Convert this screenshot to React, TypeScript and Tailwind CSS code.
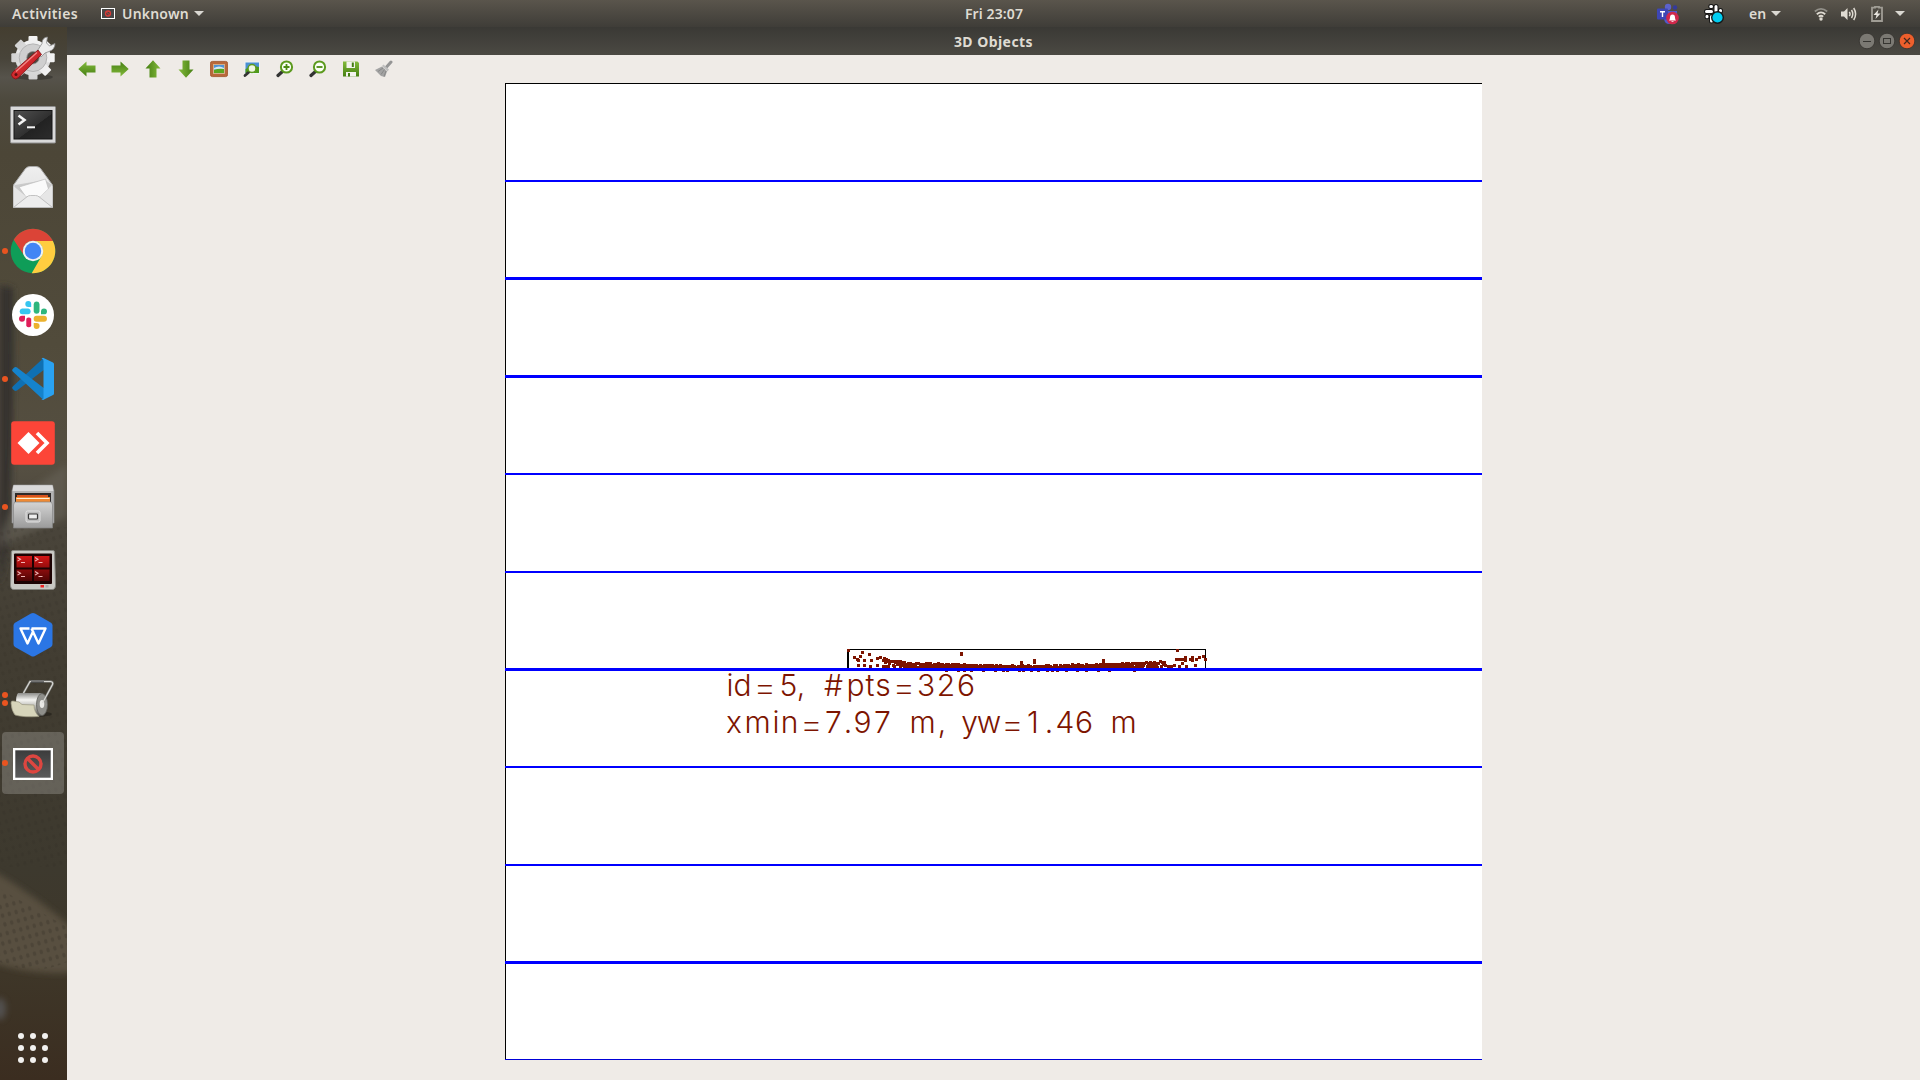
import type { ReactNode } from 'react';

const UI_FONT = "font-['Noto_Sans','Open_Sans',sans-serif]";

/* ---------- Dock icons (48 x 48) ---------- */

function Icon({ children }: { children: ReactNode }) {
  return (
    <svg viewBox="0 0 48 48" className="block h-12 w-12 overflow-visible">
      {children}
    </svg>
  );
}

const ToolsIcon = () => (
  <Icon>
    <defs>
      <linearGradient id="gear" x1="0" y1="0" x2="0" y2="1">
        <stop offset="0" stopColor="#f4f4f4" />
        <stop offset="1" stopColor="#d2d2d2" />
      </linearGradient>
      <linearGradient id="handle" x1="0" y1="0" x2="1" y2="1">
        <stop offset="0" stopColor="#e8484a" />
        <stop offset=".5" stopColor="#d1282c" />
        <stop offset="1" stopColor="#8f1518" />
      </linearGradient>
    </defs>
    <ellipse cx="25" cy="42" rx="19" ry="3" fill="#000" opacity=".25" />
    <g fill="url(#gear)">
      <circle cx="24" cy="22.7" r="17.8" />
      {[0, 45, 90, 135].map((a) => (
        <rect key={a} x="19.5" y="1" width="9" height="43.4" rx="1" transform={`rotate(${a} 24 22.7)`} />
      ))}
    </g>
    <circle cx="24" cy="22.7" r="13.8" fill="#cfcfcf" stroke="#b3b3b3" strokeWidth="1" />
    <circle cx="24" cy="22.7" r="6.2" fill="#4d4a42" stroke="#8c8c8c" strokeWidth=".8" />
    <path d="M27 18L33 8.500Q33 2.500 38.500 2L37.500 8L40.500 11L46 8.500Q46 14.500 40 16.500L36 18L32 22Z" fill="#ececec" stroke="#8a8a8a" strokeWidth=".8" />
    <path d="M29 15L3.800 37A4 4 0 0 0 9.600 42.600L32.500 19.500Z" fill="url(#handle)" stroke="#7d1214" strokeWidth=".8" />
    <path d="M28 17.500L7 36.500" stroke="#f08a88" strokeWidth="1.200" />
    <circle cx="7" cy="39.500" r="1.500" fill="#5e1012" />
  </Icon>
);

const TerminalIcon = () => (
  <Icon>
    <defs>
      <linearGradient id="term" x1="0" y1="0" x2="1" y2="1">
        <stop offset="0" stopColor="#505050" />
        <stop offset=".55" stopColor="#303030" />
        <stop offset=".56" stopColor="#222" />
        <stop offset="1" stopColor="#2c2c2c" />
      </linearGradient>
    </defs>
    <rect x="1.500" y="7.500" width="45" height="36.500" rx="1" fill="#d9d9d9" stroke="#8e8e8e" />
    <rect x="4.500" y="11" width="39" height="29.500" fill="#151515" />
    <rect x="5.500" y="12" width="37" height="27.500" fill="url(#term)" />
    <path d="M9.500 16.500L15.500 21L9.500 25.500" fill="none" stroke="#f4f4f4" strokeWidth="2.600" />
    <path d="M18 28.300H26" stroke="#f4f4f4" strokeWidth="2" />
  </Icon>
);

const MailIcon = () => (
  <Icon>
    <defs>
      <linearGradient id="mail" x1="0" y1="0" x2="0" y2="1">
        <stop offset="0" stopColor="#efefef" />
        <stop offset="1" stopColor="#dedede" />
      </linearGradient>
    </defs>
    <path d="M4.500 22L16.500 5.500Q18.500 3.500 21 3.500H27Q29.500 3.500 31.500 5.500L43.500 22V44.500H4.500Z" fill="url(#mail)" stroke="#a9a9a9" />
    <path d="M5 23L11 33L23 33L35 33L38 27L43 22L36 17L6 22Z" fill="#cacaca" />
    <path d="M10 24L36.500 16L39.500 26L31 34H17Z" fill="#fafafa" stroke="#bdbdbd" strokeWidth=".7" />
    <path d="M4.500 23L17 33.500L4.500 44.500ZM43.500 23L31 33.500L43.500 44.500Z" fill="#e6e6e6" />
    <path d="M4.500 44.500L18 33.800Q19.500 32.500 21.500 32.500H26.500Q28.500 32.500 30 33.800L43.500 44.500Z" fill="#ededed" stroke="#b5b5b5" strokeWidth=".8" />
  </Icon>
);

const ChromeIcon = () => (
  <Icon>
    <circle cx="24" cy="24" r="22.300" fill="#0f9d58" />
    <path d="M4.690 12.850A22.300 22.300 0 0 1 43.310 12.850L43.900 14H24A10 10 0 0 0 15.340 29Z" fill="#db4437" />
    <path d="M43.900 14A22.300 22.300 0 0 1 24 46.300H22.700L32.660 29A10 10 0 0 0 24 14Z" fill="#ffcd40" />
    <circle cx="24" cy="24" r="10.200" fill="#f1f1f1" />
    <circle cx="24" cy="24" r="8.200" fill="#4285f4" />
  </Icon>
);

const SlackIcon = () => (
  <Icon>
    <circle cx="24" cy="24" r="21" fill="#fff" />
    <g transform="translate(10 10)">
      <path d="M9.300 0A3 3 0 0 0 9.300 6H12.200V3A3 3 0 0 0 9.300 0ZM3 7.500H9.300A2.950 2.950 0 0 1 9.300 13.300H3A2.950 2.950 0 0 1 3 7.500Z" fill="#36c5f0" />
      <path d="M28 10.400A3 3 0 0 0 22 10.400V13.300H25A3 3 0 0 0 28 10.400ZM20.500 3V10.400A2.950 2.950 0 0 1 14.700 10.400V3A2.950 2.950 0 0 1 20.500 3Z" fill="#2eb67d" />
      <path d="M17.600 28A3 3 0 0 0 17.600 22H14.700V25A3 3 0 0 0 17.600 28ZM25 20.700H17.600A2.950 2.950 0 0 1 17.600 14.800H25A2.950 2.950 0 0 1 25 20.700Z" fill="#ecb22e" />
      <path d="M0 17.700A3 3 0 0 0 6 17.700V14.800H3A3 3 0 0 0 0 17.700ZM7.300 25V17.700A2.950 2.950 0 0 1 12.200 17.700V25A2.950 2.950 0 0 1 7.300 25Z" fill="#e01e5a" />
    </g>
  </Icon>
);

const CodeIcon = () => (
  <Icon>
    <path d="M34.500 3L36 14L8 35.500Q6.500 36.500 5 35.300L3.500 33.800Q2.500 32.500 4 31.200Z" fill="#0f70b3" />
    <path d="M34.500 45L36 34L8 12.500Q6.500 11.500 5 12.700L3.500 14.200Q2.500 15.500 4 16.800Z" fill="#1583cc" />
    <path d="M34 2.800L44 7.500Q45 8 45 9V38.500Q45 39.500 44 40L34 45Q33 45.300 32.500 44.500Q34.500 45 34.500 42V6Q34.500 3.500 32.500 3.500Z" fill="#2aa2f2" />
  </Icon>
);

const AnyDeskIcon = () => (
  <Icon>
    <rect x="2.200" y="2.200" width="43.600" height="43.600" rx="3" fill="#fc4538" />
    <path d="M19.500 13L30.500 24L19.500 35L8.500 24Z" fill="#fff" />
    <path d="M28 14L38 24L28 34" fill="none" stroke="#fff" strokeWidth="3.600" />
  </Icon>
);

const FilesIcon = () => (
  <Icon>
    <defs>
      <linearGradient id="cab" x1="0" y1="0" x2="0" y2="1">
        <stop offset="0" stopColor="#d4d4d4" />
        <stop offset="1" stopColor="#9b9b9b" />
      </linearGradient>
    </defs>
    <path d="M4.500 2H43.500L45 8V40H3V8Z" fill="#b3b3b3" stroke="#8d8d8d" strokeWidth=".7" />
    <path d="M4.500 2.300H43.500L44.500 8H3.500Z" fill="#dadada" />
    <rect x="6" y="10" width="36" height="10" fill="#2f2a28" />
    <path d="M8 12H39V19H8Z" fill="#d9531e" />
    <path d="M7 14H41V19H7Z" fill="#ef8a35" />
    <path d="M7.500 15.500H40.500" stroke="#fff0da" strokeWidth="1.200" />
    <path d="M5.500 19H42.500L43.500 22V45H4.500V22Z" fill="url(#cab)" stroke="#858585" strokeWidth=".7" />
    <rect x="17" y="28" width="14" height="11" rx="1.500" fill="#bdbdbd" stroke="#e2e2e2" />
    <rect x="19.500" y="31" width="9" height="5" rx=".8" fill="#eee" stroke="#3a3a3a" strokeWidth="1.200" />
  </Icon>
);

const TerminatorIcon = () => (
  <Icon>
    <defs>
      <linearGradient id="tred" x1="0" y1="0" x2="0" y2="1">
        <stop offset="0" stopColor="#d31515" />
        <stop offset="1" stopColor="#4e0505" />
      </linearGradient>
    </defs>
    <path d="M4 3.500H44Q45.500 3.500 45.600 5L46.500 38Q46.500 42.500 43 42.500H5Q1.500 42.500 1.500 38L2.400 5Q2.500 3.500 4 3.500Z" fill="#c9c9c4" stroke="#85857f" />
    <rect x="5" y="6.500" width="38" height="30.500" rx="1" fill="#1c0303" />
    <rect x="7.500" y="9" width="33" height="25" fill="url(#tred)" />
    <path d="M24 8.500V34.500M7 21.500H41" stroke="#1c0303" strokeWidth="2" />
    {[[8.500, 10.500], [26, 10.500], [8.500, 24.500], [26, 24.500]].map(([x, y]) => (
      <path key={`${x}-${y}`} d={`M${x} ${y}l3 1.800l-3 1.800M${x + 3.500} ${y + 5}h4`} fill="none" stroke="#f0b5b5" strokeWidth="1.100" />
    ))}
    <rect x="31.500" y="38" width="3.500" height="2.500" fill="#ed2222" />
    <rect x="36.500" y="38" width="3" height="2.500" fill="#aaa" />
  </Icon>
);

const WpsIcon = () => (
  <Icon>
    <path d="M22 2.500Q24 1.500 26 2.500L42 11.800Q43.500 12.800 43.500 14.500V33Q43.500 35 42 36L26 45Q24 46 22 45L6 36Q4.500 35 4.500 33V14.500Q4.500 12.800 6 11.800Z" fill="#2b76e5" />
    <path d="M20.500 17.500H11.500L18.500 32.500L24.500 19.500M22.500 17.500H36.500L29.500 32.500L22.500 17.500" fill="none" stroke="#fff" strokeWidth="2.400" strokeLinejoin="round" />
  </Icon>
);

const RollerIcon = () => (
  <Icon>
    <defs>
      <linearGradient id="roll" x1="0" y1="0" x2="0" y2="1">
        <stop offset="0" stopColor="#8b8b88" />
        <stop offset=".3" stopColor="#f5f5f2" />
        <stop offset=".65" stopColor="#a9a9a4" />
        <stop offset="1" stopColor="#4c4c48" />
      </linearGradient>
    </defs>
    <ellipse cx="26" cy="39" rx="17" ry="3" fill="#000" opacity=".3" />
    <path d="M14.500 18L21 6.500H41.500Q44.500 7 43.500 9.500L33.500 28" fill="none" stroke="#747470" strokeWidth="2.400" />
    <path d="M9 18H32Q38 21 38 29T31 41H14Q8 38 7 28Q7 20 9 18Z" fill="url(#roll)" />
    <path d="M4 26Q2 25.500 2 28Q2.500 36 6 40Q14 42.500 30 41.500Q25 37 25 30L13 29.500L10 27Z" fill="#d7d5bb" stroke="#99977f" strokeWidth=".7" />
    <ellipse cx="33" cy="29.500" rx="5.500" ry="11" fill="#8f8f8b" stroke="#5e5e5b" strokeWidth=".8" />
    <ellipse cx="33" cy="29" rx="2.300" ry="4" fill="#e8e8e5" />
    <path d="M14.500 18L21 6.500H41.500Q44.500 7 43.500 9.500L33.500 28" fill="none" stroke="#d8d8d4" strokeWidth="1.200" />
    <path d="M22 6.500H35" stroke="#4b4b49" strokeWidth="3" />
    <path d="M22 6H35" stroke="#999" strokeWidth="1" />
  </Icon>
);

const UnknownIcon = () => (
  <Icon>
    <defs>
      <linearGradient id="unk" x1="0" y1="0" x2="0" y2="1">
        <stop offset="0" stopColor="#3c3c3c" />
        <stop offset="1" stopColor="#5c5c5c" />
      </linearGradient>
    </defs>
    <rect x="4" y="9" width="40" height="32" fill="#fff" />
    <rect x="6.300" y="11.300" width="35.400" height="27.400" fill="url(#unk)" />
    <circle cx="24" cy="25" r="8" fill="none" stroke="#dd4640" strokeWidth="3.400" />
    <path d="M18.500 19.500L29.500 30.500" stroke="#dd4640" strokeWidth="3.400" />
  </Icon>
);

const dockItems = [
  { name: 'tools', icon: <ToolsIcon />, dots: 0 },
  { name: 'terminal', icon: <TerminalIcon />, dots: 0 },
  { name: 'mail', icon: <MailIcon />, dots: 0 },
  { name: 'chrome', icon: <ChromeIcon />, dots: 1 },
  { name: 'slack', icon: <SlackIcon />, dots: 0 },
  { name: 'code', icon: <CodeIcon />, dots: 1 },
  { name: 'anydesk', icon: <AnyDeskIcon />, dots: 0 },
  { name: 'files', icon: <FilesIcon />, dots: 1 },
  { name: 'terminator', icon: <TerminatorIcon />, dots: 0 },
  { name: 'wps', icon: <WpsIcon />, dots: 0 },
  { name: 'roller', icon: <RollerIcon />, dots: 2 },
  { name: 'unknown', icon: <UnknownIcon />, dots: 1, active: true },
];

function DockWallpaper() {
  return (
    <svg viewBox="0 0 67 1053" preserveAspectRatio="none" className="absolute inset-0 h-full w-full">
      <defs>
        <linearGradient id="wall" x1="0" y1="0" x2="0" y2="1">
          <stop offset="0" stopColor="#443e30" />
          <stop offset=".03" stopColor="#48443a" />
          <stop offset=".048" stopColor="#56534b" />
          <stop offset=".07" stopColor="#4d493d" />
          <stop offset=".12" stopColor="#4c4637" />
          <stop offset=".3" stopColor="#514b3b" />
          <stop offset=".42" stopColor="#554f42" />
          <stop offset=".48" stopColor="#49443a" />
          <stop offset=".6" stopColor="#423d32" />
          <stop offset=".8" stopColor="#3d392e" />
          <stop offset=".9" stopColor="#3e3628" />
          <stop offset="1" stopColor="#3b2d20" />
        </linearGradient>
        <filter id="soft" x="-50%" y="-50%" width="200%" height="200%">
          <feGaussianBlur stdDeviation="3" />
        </filter>
        <pattern id="knit" width="7" height="9" patternUnits="userSpaceOnUse" patternTransform="rotate(-15)">
          <ellipse cx="3.500" cy="4" rx="1.800" ry="2.500" fill="#2b271e" opacity=".25" />
        </pattern>
      </defs>
      <rect width="67" height="1053" fill="url(#wall)" />
      <path d="M0 258L13 261Q15 400 8 520L0 560Z" fill="#35322e" filter="url(#soft)" />
      <path d="M67 438L18 470L0 505V520L67 490Z" fill="#6a665c" opacity=".5" filter="url(#soft)" />
      <path d="M-10 842Q35 868 77 905V945Q35 950 -10 935Z" fill="#585040" filter="url(#soft)" />
      <rect y="500" width="67" height="340" fill="url(#knit)" opacity=".6" />
      <path d="M0 862L67 900V935Q35 950 0 935Z" fill="url(#knit)" />
      <ellipse cx="0" cy="982" rx="6" ry="11" fill="#62656c" opacity=".6" filter="url(#soft)" />
    </svg>
  );
}

function Dock() {
  return (
    <nav className="relative flex w-[67px] shrink-0 flex-col overflow-hidden">
      <DockWallpaper />
      <div className="relative flex flex-1 flex-col">
        {dockItems.map((d) => (
          <div key={d.name} className="flex h-16 items-center">
            <div className={`ml-[2px] flex h-[62px] w-[62px] items-center rounded ${d.active ? 'bg-white/20' : ''}`}>
              <div className="flex w-[7px] flex-col gap-[2px]">
                {Array.from({ length: d.dots }, (_, i) => (
                  <span key={i} className="h-[6px] w-[6px] rounded-full bg-[#e95420]" />
                ))}
              </div>
              {d.icon}
            </div>
          </div>
        ))}
        <div className="mt-auto mb-[17px] ml-[18px] grid w-[30px] grid-cols-3 gap-[6px]">
          {Array.from({ length: 9 }, (_, i) => (
            <span key={i} className="h-[6px] w-[6px] rounded-full bg-[#f2f1ef]" />
          ))}
        </div>
      </div>
    </nav>
  );
}

/* ---------- Top bar ---------- */

const Caret = () => (
  <svg viewBox="0 0 10 5" className="h-[5px] w-[10px]">
    <path d="M0 0H10L5 5Z" fill="#dad8d2" />
  </svg>
);

function TopBar() {
  return (
    <header className={`grid h-[27px] shrink-0 grid-cols-3 items-center bg-linear-to-b from-[#5a554c] to-[#3f3d38] text-[14px] leading-none font-semibold text-[#dfdbd2] ${UI_FONT}`}>
      <div className="flex items-center">
        <span className="ml-[12px] w-[68px] pt-px tracking-[0.35px] whitespace-nowrap">Activities</span>
        <svg viewBox="0 0 14 11" className="ml-[21px] h-[11px] w-[14px]">
          <rect x=".5" y=".5" width="13" height="10" fill="#474747" stroke="#fff" />
          <circle cx="7" cy="5.500" r="2.500" fill="none" stroke="#d93a36" strokeWidth="1.300" />
          <path d="M5.500 4L8.500 7" stroke="#d93a36" />
        </svg>
        <span className="mr-[6px] ml-[7px] w-[66px] pt-px tracking-[0.2px] whitespace-nowrap">Unknown</span>
        <Caret />
      </div>
      <div className="pl-[68px] text-center tracking-[0.1px]">Fri 23:07</div>
      <div className="flex items-center justify-end pr-[15px]">
        <svg viewBox="0 0 22 22" className="h-[22px] w-[22px]">
          <circle cx="11" cy="4" r="3.200" fill="#5c62cc" />
          <circle cx="18" cy="4.500" r="2.200" fill="#343a9c" />
          <path d="M7 8H20V15Q17 21 11 21Q7 20 7 15Z" fill="#5059c9" />
          <rect y="5.500" width="11" height="11" rx="1" fill="#3d46b5" />
          <path d="M3 8.700H8M5.500 8.700V14" stroke="#fff" strokeWidth="1.400" />
          <circle cx="15.500" cy="15" r="6.300" fill="#d0284b" />
          <path d="M12 17.500Q13 16.500 13 14.500Q13 11.500 15.500 11.500T18 14.500Q18 16.500 19 17.500ZM14.500 18.200H16.500V19H14.500Z" fill="#fff" />
        </svg>
        <svg viewBox="0 0 20 20" className="ml-[25px] h-5 w-5 overflow-visible">
          <g stroke="#171717" strokeWidth="5" strokeLinecap="round">
            <path d="M6.800 2.500H7.500M12 2.500V7M2.500 7.500H7.500M16.500 6.500V7M3 12.300V12.800M7.500 12.500V17" />
          </g>
          <g stroke="#fff" strokeWidth="3" strokeLinecap="round">
            <path d="M6.800 2.500H7.500M12 2.500V7M2.500 7.500H7.500M16.500 6.500V7M3 12.300V12.800M7.500 12.500V17" />
          </g>
          <circle cx="13.500" cy="13.500" r="5.800" fill="#00ccf0" stroke="#171717" strokeWidth="1.400" />
        </svg>
        <span className="ml-[25px] w-[17px] pt-px">en</span>
        <span className="ml-[5px] flex"><Caret /></span>
        <svg viewBox="0 0 14 14" className="ml-[33px] h-[14px] w-[14px]" fill="none" strokeWidth="1.800">
          <path d="M.8 4.500Q7-.8 13.200 4.500" stroke="#929089" />
          <path d="M2.800 7.200Q7 3.500 11.200 7.200" stroke="#dfdbd2" />
          <path d="M4.800 9.700Q7 7.800 9.200 9.700" stroke="#dfdbd2" />
          <circle cx="7" cy="12" r="1.700" fill="#dfdbd2" />
        </svg>
        <svg viewBox="0 0 16 14" className="ml-[13px] h-[14px] w-4" fill="none" stroke="#dfdbd2" strokeWidth="1.500">
          <path d="M0 4.500H3L6.500 1V13L3 9.500H0Z" fill="#dfdbd2" stroke="none" />
          <path d="M8.300 4.800Q9.800 7 8.300 9.200M10.500 3Q13 7 10.500 11M12.700 1Q16.500 7 12.700 13" />
        </svg>
        <svg viewBox="0 0 12 16" className="ml-[14px] h-4 w-3">
          <path d="M4 1.700V.8H8V1.700H11V15H1V1.700Z" fill="none" stroke="#a09d95" strokeWidth="1.800" />
          <path d="M7.500 3.500L2.500 9H5.500L4.500 13L9.500 7.500H6.500Z" fill="#e8e5df" />
        </svg>
        <span className="ml-[12px] flex"><Caret /></span>
      </div>
    </header>
  );
}

/* ---------- Window ---------- */

function TitleBar() {
  return (
    <div className="grid h-7 shrink-0 grid-cols-[1fr_auto_1fr] items-center bg-linear-to-b from-[#3a3935] to-[#4b4943]">
      <span />
      <span className={`pt-px text-[14px] leading-none font-bold tracking-[0.45px] text-[#dfdbd2] ${UI_FONT}`}>3D Objects</span>
      <div className="flex items-center justify-end gap-1 pr-[5px]">
        {['min', 'max', 'close'].map((k) => (
          <svg key={k} viewBox="0 0 16 16" className="h-4 w-4 overflow-visible">
            <circle cx="8" cy="8" r="7.800" fill={k === 'close' ? '#ee5f2c' : '#7b7973'} stroke="#33312d" strokeWidth=".8" />
            {k === 'min' && <path d="M4 8.500H12" stroke="#363531" strokeWidth="1" />}
            {k === 'max' && <rect x="4.500" y="5.500" width="7" height="5" fill="none" stroke="#363531" />}
            {k === 'close' && <path d="M5 5L11 11M11 5L5 11" stroke="#40281e" strokeWidth="1.200" />}
          </svg>
        ))}
      </div>
    </div>
  );
}

const Arrow = ({ turn }: { turn: number }) => (
  <g transform={`rotate(${turn} 9 9)`}>
    <path d="M.3 9L8.500 1.500V5.500H17.500V12.500H8.500V16.500Z" fill="url(#green)" />
  </g>
);

const Magnifier = ({ sign }: { sign: string }) => (
  <>
    <path d="M2 15.500L7 11" stroke="#333" strokeWidth="3.200" strokeLinecap="round" />
    <circle cx="10.500" cy="7" r="5.600" fill="#fbfff6" stroke="#5c9a1e" strokeWidth="2" />
    <path d={sign} stroke="#4c8a14" strokeWidth="1.800" />
  </>
);

const tools: { name: string; art: ReactNode }[] = [
  { name: 'left', art: <Arrow turn={0} /> },
  { name: 'right', art: <Arrow turn={180} /> },
  { name: 'up', art: <Arrow turn={90} /> },
  { name: 'down', art: <Arrow turn={270} /> },
  {
    name: 'picture',
    art: (
      <>
        <rect x=".4" y="1.400" width="17.200" height="15.200" rx="2" fill="#b9683a" stroke="#9c4f24" strokeWidth=".8" />
        <rect x="3.500" y="4.500" width="11" height="9" fill="#4f93d6" stroke="#d9b48c" strokeWidth=".9" />
        <path d="M4 8Q9 5 14 8V9.500H4Z" fill="#d5e8f2" />
        <path d="M4 10Q9 8 14 9V13H4Z" fill="#5aa621" />
      </>
    ),
  },
  {
    name: 'region',
    art: (
      <>
        <rect x="1.500" y="1.500" width="15.500" height="12.500" fill="#eef2f5" />
        <rect x="2.500" y="2.500" width="13.500" height="10.500" fill="#4a8fd3" />
        <path d="M2.500 9Q9 5 16 7V13H2.500Z" fill="#4f9a1c" />
        <path d="M2 15.500L6 12" stroke="#333" strokeWidth="2.800" strokeLinecap="round" />
        <circle cx="9" cy="8.500" r="4" fill="#eef7e2" stroke="#5c9a1e" strokeWidth="1.500" />
      </>
    ),
  },
  { name: 'zoom-in', art: <Magnifier sign="M7.500 7H13.500M10.500 4V10" /> },
  { name: 'zoom-out', art: <Magnifier sign="M7.500 7H13.500" /> },
  {
    name: 'save',
    art: (
      <>
        <path d="M1 1.500H15.500L17 3V16.500H1Z" fill="url(#green)" />
        <rect x="4.500" y="1.500" width="8.500" height="6.500" fill="#f3f3ee" />
        <rect x="9.800" y="2.500" width="2" height="4.500" fill="#447d12" />
        <rect x="4" y="12" width="10" height="4.500" fill="#f3f3ee" />
        <rect x="6" y="13" width="2" height="3.500" fill="#447d12" />
      </>
    ),
  },
  {
    name: 'brush',
    art: (
      <>
        <path d="M11.500 7L16 2" stroke="#959595" strokeWidth="3" strokeLinecap="round" />
        <path d="M8.500 4.500L14 9.500L12.500 11.500L7 6Z" fill="#bebebe" />
        <path d="M7 6.500L12 11.500L10 17L6 16L0 10Z" fill="#a3a3a3" />
        <path d="M8 8L3 11.500M9.500 9.500L6 14.500M11 11L9 16.500" stroke="#818181" strokeWidth=".8" />
      </>
    ),
  },
];

function Toolbar() {
  return (
    <div className="flex h-7 shrink-0 items-center gap-[15px] pl-[11px]">
      {tools.map((t) => (
        <svg key={t.name} viewBox="0 0 18 18" className="h-[18px] w-[18px]">
          <defs>
            <linearGradient id="green" x1="0" y1="0" x2="0" y2="1">
              <stop offset="0" stopColor="#84ba3c" />
              <stop offset="1" stopColor="#457f12" />
            </linearGradient>
          </defs>
          {t.art}
        </svg>
      ))}
    </div>
  );
}

/* ---------- Plot: coordinates are relative to a 977 x 977 canvas ---------- */

// [top, thickness] of each range marker
const markers = [
  [97, 2], [194, 3], [292, 3], [390, 2], [488, 2], [585, 3], [683, 2], [781, 2], [878, 3],
];

const stray = [
  [343, 567], [349, 574], [352, 576], [357, 569], [355, 573], [364, 571], [353, 582], [359, 582],
  [353, 577], [359, 577], [366, 577], [365, 583], [372, 575], [375, 574], [372, 582], [378, 577],
  [378, 583], [456, 570], [456, 571], [516, 579], [516, 581], [529, 577], [529, 579], [598, 577], [598, 579],
  [672, 567], [671, 576], [674, 576], [677, 576], [680, 574], [680, 577], [687, 574], [687, 577],
  [691, 576], [694, 574], [698, 573], [700, 576], [690, 582], [681, 583], [677, 580], [674, 583],
  [669, 582], [666, 583], [663, 583], [685, 576],
];

// Upper edge of the dense arc of points, by column
const arc = [
  [379, 576], [390, 578], [400, 580], [430, 581], [470, 582], [520, 583], [560, 582.5], [600, 581.5], [640, 580], [661, 579],
];

function arcTop(x: number) {
  for (let i = 1; i < arc.length; i++) {
    if (x <= arc[i][0]) {
      const [x0, y0] = arc[i - 1];
      const [x1, y1] = arc[i];
      return y0 + ((y1 - y0) * (x - x0)) / (x1 - x0);
    }
  }
  return 579;
}

const hash = (n: number) => {
  const s = Math.sin(n * 127.1) * 43758.5453;
  return s - Math.floor(s);
};

const dense: number[][] = [];
for (let x = 379, i = 0; x < 661; x += 2, i++) {
  const top = arcTop(x);
  dense.push([x, Math.round(top + hash(i) * 2 - 1)]);
  if (hash(i + 300) > 0.2) dense.push([x + 1, Math.min(584, Math.round(top + 1.5 + hash(i + 700) * 3))]);
  if (hash(i + 900) > 0.5) dense.push([x, 583]);
}

const below = [440, 452, 458, 465, 477, 489, 497, 501, 513, 517, 525, 532, 541, 546, 551, 560, 571, 580, 592, 603, 628];

const labels = [
  {
    text: 'id=5, #pts=326',
    y: 612.5,
    x: [225, 237.5, 260, 283.5, 296, 306, 328.5, 350.5, 365, 378, 399, 421, 441, 461],
  },
  {
    text: 'xmin=7.97 m, yw=1.46 m',
    y: 649.5,
    x: [229, 252.5, 271, 284.5, 306.5, 328.5, 343, 357.5, 377.5, 392, 417.5, 437, 450, 464.5, 484, 507.5, 528, 544, 560, 579, 596, 618.5],
  },
];

function Label({ text, x, y }: { text: string; x: number[]; y: number }) {
  return (
    <text xmlSpace="preserve">
      {text.split('').map((c, i) => (
        <tspan key={i} x={x[i]} y={c === '=' ? y + 4 : y} className={c === '=' ? 'text-[37px] font-extralight' : ''}>
          {c}
        </tspan>
      ))}
    </text>
  );
}

function Plot() {
  return (
    <div className="relative ml-[438px] h-[977px] w-[977px] shrink-0 border-t border-l border-black bg-white">
      <svg viewBox="0 0 977 977" className="absolute -top-px -left-px h-[977px] w-[977px]">
        <g fill="#7d1400" shapeRendering="crispEdges">
          <path d="M343 566.500H700.500V586" fill="none" stroke="#000" />
          <rect x="342" y="567" width="2" height="18" fill="#000" />
          {[...stray, ...dense].map(([x, y], i) => (
            <rect key={i} x={x - 1} y={y - 1} width="3" height="3" />
          ))}
        </g>
        <g fill="#00f" shapeRendering="crispEdges">
          {markers.map(([y, h]) => (
            <rect key={y} x="0" y={y} width="977" height={h} />
          ))}
          <rect x="0" y="976" width="977" height="1" fill="#0000d8" />
        </g>
        <g fill="#7d1400" shapeRendering="crispEdges">
          {below.map((x) => (
            <rect key={x} x={x} y="588" width="3" height="1" />
          ))}
        </g>
        <g fill="#7d1400" textAnchor="middle" className="font-['Inter','Lato',sans-serif] text-[30px] font-light">
          {labels.map((l) => (
            <Label key={l.text} {...l} />
          ))}
        </g>
      </svg>
    </div>
  );
}

export default function App() {
  return (
    <div className="flex h-[1080px] w-[1920px] flex-col overflow-hidden bg-[#efebe7]">
      <TopBar />
      <div className="flex min-h-0 flex-1">
        <Dock />
        <main className="flex min-w-0 flex-1 flex-col">
          <TitleBar />
          <Toolbar />
          <Plot />
        </main>
      </div>
    </div>
  );
}
